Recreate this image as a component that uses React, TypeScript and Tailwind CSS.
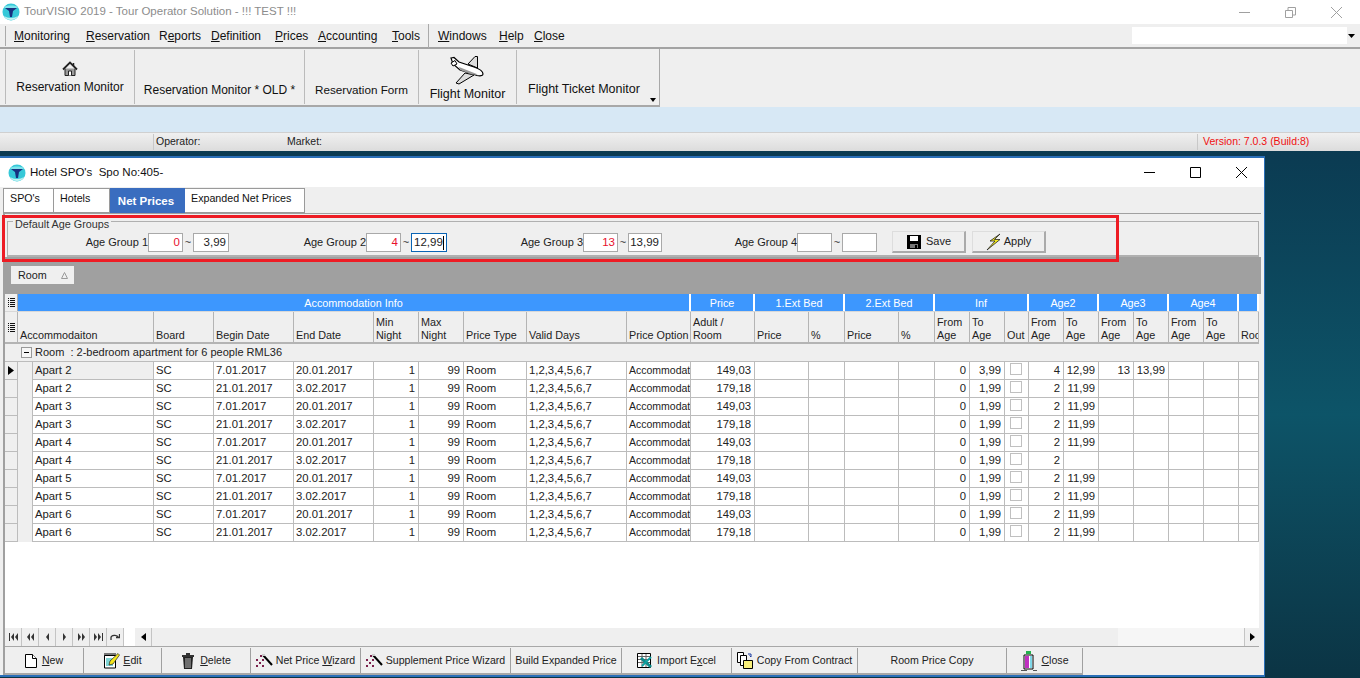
import React from "react";

const COLS =
  "grid grid-cols-[13px_15px_121px_60px_80px_80px_45px_45px_63px_100px_64px_64px_54px_36px_54px_36px_35px_35px_24px_35px_35px_35px_35px_35px_35px_20px]";

type Row = {
  name: string;
  begin: string;
  end: string;
  price: string;
  infTo: string;
  a2From: string;
  a2To?: string;
  a3From?: string;
  a3To?: string;
};

const rows: Row[] = [
  { name: "Apart 2", begin: "7.01.2017", end: "20.01.2017", price: "149,03", infTo: "3,99", a2From: "4", a2To: "12,99", a3From: "13", a3To: "13,99" },
  { name: "Apart 2", begin: "21.01.2017", end: "3.02.2017", price: "179,18", infTo: "1,99", a2From: "2", a2To: "11,99" },
  { name: "Apart 3", begin: "7.01.2017", end: "20.01.2017", price: "149,03", infTo: "1,99", a2From: "2", a2To: "11,99" },
  { name: "Apart 3", begin: "21.01.2017", end: "3.02.2017", price: "179,18", infTo: "1,99", a2From: "2", a2To: "11,99" },
  { name: "Apart 4", begin: "7.01.2017", end: "20.01.2017", price: "149,03", infTo: "1,99", a2From: "2", a2To: "11,99" },
  { name: "Apart 4", begin: "21.01.2017", end: "3.02.2017", price: "179,18", infTo: "1,99", a2From: "2" },
  { name: "Apart 5", begin: "7.01.2017", end: "20.01.2017", price: "149,03", infTo: "1,99", a2From: "2", a2To: "11,99" },
  { name: "Apart 5", begin: "21.01.2017", end: "3.02.2017", price: "179,18", infTo: "1,99", a2From: "2", a2To: "11,99" },
  { name: "Apart 6", begin: "7.01.2017", end: "20.01.2017", price: "149,03", infTo: "1,99", a2From: "2", a2To: "11,99" },
  { name: "Apart 6", begin: "21.01.2017", end: "3.02.2017", price: "179,18", infTo: "1,99", a2From: "2", a2To: "11,99" },
];

const AppLogo = () => (
  <svg width="18" height="18" viewBox="0 0 18 18">
    <circle cx="9" cy="9" r="8.5" fill="#35c8d8" />
    <path d="M2 13c2 3 4 4 7 4s5-1 7-4c-2 1-4 2-7 2s-5-1-7-2z" fill="#bff3f3" />
    <path d="M3 5h12l-4 3-1 6H8L7 8z" fill="#17307f" />
    <path d="M2 4c3-2 11-2 14 0l-1 1H3z" fill="#7fe4ec" />
  </svg>
);

const Home = () => (
  <svg width="16" height="16" viewBox="0 0 16 16" fill="none" stroke="#222">
    <path d="M1 8.500L8 1.500L15 8.500" strokeWidth="1.800" />
    <path d="M3 7.500V14.500H13V7.500" fill="#9a9a9a" />
    <path d="M6.500 14.500V10H9.500V14.500" fill="#fff" />
    <path d="M11.500 2V5" strokeWidth="1.500" />
  </svg>
);

const Plane = () => (
  <svg width="36" height="30" viewBox="0 0 36 30">
    <path d="M18 9L25 1.500L27.500 1.500L27.500 13z" fill="#ddd" stroke="#000" />
    <path d="M15 18L24 20L9 29L6 28z" fill="#ddd" stroke="#000" />
    <path d="M1 3L4 2.500L9 7L24 12C30 14 33 17 33 19C33 21 30 21 27 20.500L10 15L3 9z" fill="#fff" stroke="#000" strokeWidth="1.200" />
    <path d="M9 12L28 19.500L22 19.500L10 15z" fill="#999" />
    <path d="M1 8L5 5.500L7 9L3 11z" fill="#fff" stroke="#000" />
  </svg>
);

const Floppy = () => (
  <svg width="16" height="16" viewBox="0 0 16 16">
    <path d="M1 1H15V15H1z" fill="#000" />
    <path d="M4 2H12V7H4z" fill="#fff" />
    <path d="M4 10H12V14H4z" fill="#777" />
    <path d="M9 11H11V14H9z" fill="#000" />
  </svg>
);

const Bolt = () => (
  <svg width="16" height="18" viewBox="0 0 16 18">
    <path d="M14 1L4 8H9L1 17L14 6.500H8.500z" fill="#f6ec1e" stroke="#222" strokeWidth="0.800" />
  </svg>
);

const NewDoc = () => (
  <svg width="12" height="14" viewBox="0 0 12 14" fill="#fff" stroke="#000">
    <path d="M0.500 0.500H7.500L11.500 4.500V13.500H0.500z" />
    <path d="M7.500 0.500V4.500H11.500" />
  </svg>
);

const EditNote = () => (
  <svg width="17" height="17" viewBox="0 0 17 17">
    <path d="M1.500 3.500H12.500V16H1.500z" fill="#fff" stroke="#000" />
    <path d="M2 1V4M4 1V4M6 1V4M8 1V4M10 1V4M12 1V4" stroke="#000" />
    <path d="M3 7H10M3 9H8M3 11H8M3 13H10" stroke="#0aa" />
    <path d="M7 9L15 1.500L16.500 3L10 12L6 13z" fill="#f4e61c" stroke="#222" strokeWidth="0.700" />
  </svg>
);

const Trash = () => (
  <svg width="14" height="18" viewBox="0 0 14 18">
    <path d="M1 3H13V5H1z" fill="#333" />
    <path d="M5 1H9V3H5z" fill="#333" />
    <path d="M2 5H12L11 17H3z" fill="#222" />
    <path d="M5 6V16M7 6V16M9 6V16" stroke="#bbb" />
  </svg>
);

const Wand = () => (
  <svg width="17" height="16" viewBox="0 0 17 16">
    <path d="M7 2L16 12" stroke="#000" strokeWidth="2" />
    <path d="M6 1H9V3H6z" fill="#ccc" />
    <path d="M4 2h2v2H4zM0 6h2v2H0zM6 6h2v2H6zM3 9h2v2H3zM0 12h2v2H0zM6 12h2v2H6z" fill="#7a1f4a" />
  </svg>
);

const ExcelIcon = () => (
  <svg width="17" height="17" viewBox="0 0 17 17">
    <path d="M0.500 1.500H13.500V15.500H0.500z" fill="#fff" stroke="#000" />
    <path d="M1 4.500H13M1 7.500H13M1 10.500H13M5 2V15M9 2V15" stroke="#666" />
    <path d="M4 6L14 15" stroke="#0d8a8a" strokeWidth="3" />
    <path d="M14 5L5 14" stroke="#11a0a0" strokeWidth="2" />
  </svg>
);

const CopyIcon = () => (
  <svg width="17" height="17" viewBox="0 0 17 17">
    <path d="M0.500 0.500H6.500V10.500H0.500z" fill="#fff" stroke="#000" />
    <path d="M3.500 3.500H9.500V13.500H3.500z" fill="#fff" stroke="#000" />
    <path d="M6.500 8.500H15.500V16.500H6.500z" fill="#f7ee7a" stroke="#000" />
    <path d="M11 2H14V5M14 5L12.500 3.500" stroke="#1a3aa0" fill="none" />
  </svg>
);

const DoorIcon = () => (
  <svg width="18" height="22" viewBox="0 0 18 22">
    <path d="M6 1H11V4H6z" fill="#22b14c" />
    <path d="M4 5H13V19H4z" fill="#fff" stroke="#000" />
    <path d="M5 6H9V18H5z" fill="#c030c0" />
    <path d="M10 6H12V18H10z" fill="#7fd7e8" />
    <path d="M1 20H7V21H1zM13 20H17V21H13z" fill="#555" />
  </svg>
);

const NavIcon = ({ d }: { d: string }) => (
  <svg width="9" height="8" viewBox="0 0 9 8" fill="#333">
    <path d={d} />
  </svg>
);

const navPaths = [
  "M0 0H1V8H0zM5 0V8L2 4zM9 0V8L6 4z",
  "M4 0V8L1 4zM8 0V8L5 4z",
  "M6 0V8L3 4z",
  "M3 0V8L6 4z",
  "M1 0V8L4 4zM5 0V8L8 4z",
  "M0 0V8L3 4zM4 0V8L7 4zM8 0H9V8H8z",
];

const AgeGroup = ({ label, labelW, from, to, toW, focused }: { label: string; labelW: string; from?: string; to?: string; toW: string; focused?: boolean }) => (
  <div className="flex items-center">
    <span className={`${labelW} text-right text-[11px] text-[#222]`}>{label}</span>
    <div className="w-[35px] h-[19px] bg-white border border-[#a9a9a9] text-right pr-[2px] text-[11.500px] leading-[17px] text-[#e8112d]">{from}</div>
    <span className="w-[10px] text-center text-[11px] text-[#333]">~</span>
    <div className={`${toW} h-[19px] bg-white border ${focused ? "border-[#0a64b4] text-left pl-[2px]" : "border-[#a9a9a9] text-right pr-[2px]"} text-[11.500px] leading-[17px] text-[#222]`}>
      {to}
      {focused && <span className="inline-block w-px h-[14px] bg-black align-middle" />}
    </div>
  </div>
);

const MenuItem = ({ w, pre = "", u, post }: { w: string; pre?: string; u: string; post: string }) => (
  <span className={`${w} whitespace-nowrap`}>
    {pre}
    <u>{u}</u>
    {post}
  </span>
);

const ToolButton = ({ w, children }: { w: string; children: React.ReactNode }) => (
  <div className={`${w} h-[25px] border-r border-[#a0a0a0] flex items-center justify-center gap-[3px] text-[10.600px] text-[#222] whitespace-nowrap`}>
    {children}
  </div>
);

const Band = ({ span, children }: { span: string; children?: React.ReactNode }) => (
  <div className={`${span} h-[17px] bg-[#3d97fe] border-r-2 border-white text-white text-center text-[10.800px] leading-[18px] overflow-hidden`}>
    {children}
  </div>
);

const Head = ({ top, bottom }: { top?: string; bottom: string }) => (
  <div className="h-[32px] bg-[#efefef] border-r border-b-2 border-[#b4b4b4] pl-[2px] text-[10.800px] leading-[13px] text-[#222] overflow-hidden whitespace-nowrap flex flex-col justify-end">
    {top && <span>{top}</span>}
    <span>{bottom}</span>
  </div>
);

const Cell = ({ right, children, selected }: { right?: boolean; children?: React.ReactNode; selected?: boolean }) => (
  <div className={`h-[18px] ${selected ? "bg-[#efefef]" : "bg-white"} border-r border-b border-[#bcbcbc] ${right ? "text-right pr-[3px]" : "text-left pl-[2px]"} text-[11.300px] leading-[17px] text-[#222] overflow-hidden whitespace-nowrap`}>
    {children}
  </div>
);

export default function App() {
  return (
    <div className="w-[1360px] h-[678px] overflow-hidden flex flex-col bg-[#0e4a5e] font-['Liberation_Sans',Arial,sans-serif]">
      {/* main window */}
      <div className="h-[24px] bg-white flex items-center pl-[2px] pr-[18px]">
        <AppLogo />
        <span className="ml-[4px] text-[11.500px] text-[#8c8c8c]">TourVISIO 2019 - Tour Operator Solution - !!! TEST !!!</span>
        <div className="ml-auto flex items-center gap-[35px] text-[#a0a0a0]">
          <svg width="11" height="11" viewBox="0 0 11 11" stroke="currentColor"><path d="M0 5.500H11" /></svg>
          <svg width="11" height="11" viewBox="0 0 11 11" fill="none" stroke="currentColor"><path d="M0.500 3.500H7.500V10.500H0.500zM3 3V0.500H10.500V8H8" /></svg>
          <svg width="11" height="11" viewBox="0 0 11 11" stroke="currentColor"><path d="M0 0L11 11M11 0L0 11" /></svg>
        </div>
      </div>

      <div className="h-[25px] bg-[#efefef] border-b-2 border-[#a3a3a3] flex items-center pl-[5px] pr-[4px] text-[12px] text-[#111]">
        <div className="w-[423px] h-[20px] border-l border-[#aaa] flex items-center pl-[8px]">
          <MenuItem w="w-[72px]" u="M" post="onitoring" />
          <MenuItem w="w-[73px]" u="R" post="eservation" />
          <MenuItem w="w-[52px]" pre="R" u="e" post="ports" />
          <MenuItem w="w-[64px]" u="D" post="efinition" />
          <MenuItem w="w-[43px]" u="P" post="rices" />
          <MenuItem w="w-[74px]" u="A" post="ccounting" />
          <MenuItem w="w-[28px]" u="T" post="ools" />
        </div>
        <div className="h-[24px] border-l border-[#aaa] pl-[9px] flex items-center">
          <MenuItem w="w-[61px]" u="W" post="indows" />
          <MenuItem w="w-[35px]" u="H" post="elp" />
          <MenuItem w="w-[30px]" u="C" post="lose" />
        </div>
        <div className="ml-auto w-[224px] h-[17px] bg-white flex items-center justify-end">
          <span className="w-[9px] h-full bg-[#efefef] flex items-center justify-center">
            <svg width="7" height="4" viewBox="0 0 7 4"><path d="M0 0H7L3.500 4z" fill="#000" /></svg>
          </span>
        </div>
      </div>

      <div className="h-[58px] bg-[#efefef]">
        <div className="w-[660px] h-[58px] border-r border-b-2 border-[#a8a8a8] flex pl-[5px] text-[12px] text-[#111]">
          <div className="w-[130px] border-l border-r border-[#bbb] flex flex-col items-center justify-start pt-[11px] gap-[1px] my-[1px]">
            <Home />
            <span>Reservation Monitor</span>
          </div>
          <div className="w-[170px] border-r border-[#bbb] flex items-end justify-center pb-[5px] my-[1px]">Reservation Monitor * OLD *</div>
          <div className="w-[114px] border-r border-[#bbb] flex items-end justify-center pb-[5px] my-[1px] text-[11.700px]">Reservation Form</div>
          <div className="w-[98px] border-r border-[#bbb] flex flex-col items-center justify-end my-[1px] text-[12.500px]">
            <Plane />
            <span>Flight Monitor</span>
          </div>
          <div className="relative flex-1 flex items-end pl-[11px] pb-[5px] my-[1px] text-[12.500px]">
            Flight Ticket Monitor
            <svg className="absolute right-[3px] bottom-[2px]" width="6" height="4" viewBox="0 0 6 4"><path d="M0 0H6L3 4z" fill="#000" /></svg>
          </div>
        </div>
      </div>

      <div className="h-[25px] bg-[#d7e8f5]" />

      <div className="h-[19px] bg-gradient-to-b from-[#f0f0f0] to-[#dcdcdc] border-t border-[#d0d0d0] flex items-center text-[10.500px] text-[#222]">
        <div className="w-[153px]" />
        <div className="w-[134px] border-l border-[#c8c8c8] pl-[2px]">Operator:</div>
        <div>Market:</div>
        <div className="ml-auto w-[163px] border-l border-[#c8c8c8] pl-[5px] text-[#f01010]">Version: 7.0.3 (Build:8)</div>
      </div>

      {/* desktop */}
      <div className="flex-1 pt-[5px] bg-gradient-to-b from-[#0b3b52] via-[#0d5468] to-[#0b3444] min-h-0">
        {/* child window */}
        <div className="relative w-[1265px] h-[521px] flex flex-col bg-[#efefef] border-t-2 border-r border-b-2 border-[#2a6fb8]">
          <div className="h-[29px] shrink-0 bg-white flex items-center pl-[8px] pr-[17px]">
            <AppLogo />
            <span className="ml-[4px] text-[11.500px] text-[#111] whitespace-pre">Hotel SPO's  Spo No:405-</span>
            <div className="ml-auto flex items-center gap-[35px] text-black">
              <svg width="11" height="11" viewBox="0 0 11 11" stroke="currentColor"><path d="M0 5.500H11" /></svg>
              <svg width="11" height="11" viewBox="0 0 11 11" fill="none" stroke="currentColor"><path d="M0.500 0.500H10.500V10.500H0.500z" /></svg>
              <svg width="11" height="11" viewBox="0 0 11 11" stroke="currentColor"><path d="M0 0L11 11M11 0L0 11" /></svg>
            </div>
          </div>

          <div className="h-[26px] shrink-0 flex pl-[3px] pt-[1px] text-[10.700px] text-[#111]">
            <div className="w-[51px] bg-white border border-[#9a9a9a] pl-[6px] leading-[19px]">SPO's</div>
            <div className="w-[56px] bg-white border-y border-r border-[#9a9a9a] pl-[6px] leading-[19px]">Hotels</div>
            <div className="w-[75px] bg-[#3a6dbf] text-white font-bold text-center text-[11.500px] leading-[26px] pr-[3px]">Net Prices</div>
            <div className="w-[120px] bg-white border-y border-r border-[#9a9a9a] pl-[6px] leading-[19px]">Expanded Net Prices</div>
          </div>

          <div className="flex-1 min-h-0 ml-[3px] mr-[3px] border-l-2 border-t border-[#a0a0a0] flex flex-col">
            <fieldset className="h-[42px] shrink-0 mt-[1px] mx-[2px] border border-[#b0b0b0] border-b-2 pl-[5px]">
              <legend className="px-[2px] text-[10.800px] leading-[13px] text-[#333] translate-y-[3px]">Default Age Groups</legend>
              <div className="flex items-center -ml-[8px] mt-[4px]">
                <AgeGroup label="Age Group 1" labelW="w-[143px]" from="0" to="3,99" toW="w-[36px]" />
                <AgeGroup label="Age Group 2" labelW="w-[137px]" from="4" to="12,99" toW="w-[36px]" focused />
                <AgeGroup label="Age Group 3" labelW="w-[136px]" from="13" to="13,99" toW="w-[34px]" />
                <AgeGroup label="Age Group 4" labelW="w-[135px]" toW="w-[35px]" />
                <div className="ml-[15px] w-[74px] h-[22px] -mt-[1px] border-r-2 border-b-2 border-[#aaa] border-t border-l border-t-[#ddd] border-l-[#ddd] flex items-center justify-center gap-[4px] text-[11px] text-[#222]">
                  <Floppy /> Save
                </div>
                <div className="ml-[6px] w-[74px] h-[22px] -mt-[1px] border-r-2 border-b-2 border-[#aaa] border-t border-l border-t-[#ddd] border-l-[#ddd] flex items-center justify-center gap-[2px] text-[11px] text-[#222]">
                  <Bolt /> Apply
                </div>
              </div>
            </fieldset>

            <div className="h-[37px] shrink-0 bg-[#a0a0a0] pl-[6px] pt-[9px]">
              <div className="w-[63px] h-[18px] bg-[#efefef] flex items-center pl-[7px] gap-[14px] text-[10.800px] text-[#222]">
                Room
                <svg width="7" height="7" viewBox="0 0 7 7" fill="none" stroke="#999"><path d="M3.500 0.500L6.500 6.500H0.500z" /></svg>
              </div>
            </div>

            {/* grid */}
            <div className="w-[1254px] bg-white overflow-hidden flex-1 min-h-0">
              <div className={COLS}>
                <div className="h-[17px] bg-[#efefef] border-r border-[#aaa] flex items-center justify-center"><ListIcon /></div>
                <Band span="col-span-10">Accommodation Info</Band>
                <Band span="col-span-1">Price</Band>
                <Band span="col-span-2">1.Ext Bed</Band>
                <Band span="col-span-2">2.Ext Bed</Band>
                <Band span="col-span-3">Inf</Band>
                <Band span="col-span-2">Age2</Band>
                <Band span="col-span-2">Age3</Band>
                <Band span="col-span-2">Age4</Band>
                <Band span="col-span-1" />
              </div>
              <div className={`${COLS} border-t border-[#d8d8d8]`}>
                <div className="h-[32px] bg-[#efefef] border-r border-b-2 border-[#b4b4b4] flex items-center justify-center"><ListIcon /></div>
                <div className="col-span-2"><Head bottom="Accommodaiton" /></div>
                <Head bottom="Board" />
                <Head bottom="Begin Date" />
                <Head bottom="End Date" />
                <Head top="Min" bottom="Night" />
                <Head top="Max" bottom="Night" />
                <Head bottom="Price Type" />
                <Head bottom="Valid Days" />
                <Head bottom="Price Option" />
                <Head top="Adult /" bottom="Room" />
                <Head bottom="Price" />
                <Head bottom="%" />
                <Head bottom="Price" />
                <Head bottom="%" />
                <Head top="From" bottom="Age" />
                <Head top="To" bottom="Age" />
                <Head bottom="Out" />
                <Head top="From" bottom="Age" />
                <Head top="To" bottom="Age" />
                <Head top="From" bottom="Age" />
                <Head top="To" bottom="Age" />
                <Head top="From" bottom="Age" />
                <Head top="To" bottom="Age" />
                <Head bottom="Roo" />
              </div>
              <div className="h-[18px] bg-[#efefef] border-b border-[#bcbcbc] flex items-center pl-[16px] text-[11px] text-[#222]">
                <span className="w-[11px] h-[11px] border border-[#999] bg-[#f6f6f6] flex items-center justify-center mr-[3px]">
                  <span className="w-[5px] h-px bg-black" />
                </span>
                <span className="whitespace-pre">Room  : 2-bedroom apartment for 6 people RML36</span>
              </div>
              {rows.map((r, i) => (
                <div key={i} className={COLS}>
                  <div className="h-[18px] bg-[#efefef] border-r border-b border-[#bcbcbc] flex items-center justify-center">
                    {i === 0 && <svg width="6" height="9" viewBox="0 0 6 9"><path d="M0 0L6 4.500L0 9z" fill="#000" /></svg>}
                  </div>
                  <div className="h-[18px] bg-[#efefef] border-r border-[#bcbcbc]" />
                  <Cell selected={i === 0}>{r.name}</Cell>
                  <Cell>SC</Cell>
                  <Cell>{r.begin}</Cell>
                  <Cell>{r.end}</Cell>
                  <Cell right>1</Cell>
                  <Cell right>99</Cell>
                  <Cell>Room</Cell>
                  <Cell>1,2,3,4,5,6,7</Cell>
                  <Cell><span className="text-[10.500px]">Accommodat</span></Cell>
                  <Cell right>{r.price}</Cell>
                  <Cell />
                  <Cell />
                  <Cell />
                  <Cell />
                  <Cell right>0</Cell>
                  <Cell right>{r.infTo}</Cell>
                  <Cell>
                    <span className="block w-[12px] h-[12px] mt-[1px] ml-[3px] bg-white border border-[#c0c0c0]" />
                  </Cell>
                  <Cell right>{r.a2From}</Cell>
                  <Cell right>{r.a2To}</Cell>
                  <Cell right>{r.a3From}</Cell>
                  <Cell right>{r.a3To}</Cell>
                  <Cell />
                  <Cell />
                  <Cell />
                </div>
              ))}
            </div>

            {/* navigator and scrollbar */}
            <div className="h-[19px] shrink-0 w-[1254px] flex bg-[#efefef] border-b border-[#a8a8a8]">
              {navPaths.map((d, i) => (
                <div key={i} className="w-[17px] border-r border-[#c4c4c4] flex items-center justify-center"><NavIcon d={d} /></div>
              ))}
              <div className="w-[17px] border-r border-[#c4c4c4] flex items-center justify-center">
                <svg width="10" height="8" viewBox="0 0 10 8" fill="none" stroke="#333" strokeWidth="1.300"><path d="M1 7V4.500C1 2.500 7 1 8.500 4.500M6 4.500H9.500V1" /></svg>
              </div>
              <div className="w-[11px] bg-white" />
              <div className="w-[17px] border-r border-[#c4c4c4] flex items-center justify-center">
                <svg width="5" height="8" viewBox="0 0 5 8"><path d="M5 0V8L0 4z" fill="#000" /></svg>
              </div>
              <div className="w-[966px]" />
              <div className="w-[126px] bg-[#f6f6f6]" />
              <div className="flex-1 border-l border-[#c4c4c4] flex items-center justify-center">
                <svg width="5" height="8" viewBox="0 0 5 8"><path d="M0 0V8L5 4z" fill="#000" /></svg>
              </div>
            </div>

            {/* bottom toolbar */}
            <div className="h-[28px] shrink-0 pt-[1px]">
              <div className="w-fit flex border-b-2 border-[#a8a8a8]">
                <ToolButton w="w-[79px]"><NewDoc /> <span className="ml-[2px]"><u>N</u>ew</span></ToolButton>
                <ToolButton w="w-[78px]"><EditNote /> <span><u>E</u>dit</span></ToolButton>
                <ToolButton w="w-[89px]"><Trash /> <span className="ml-[2px]"><u>D</u>elete</span></ToolButton>
                <ToolButton w="w-[110px]"><Wand /> <span>Net Price <u>W</u>izard</span></ToolButton>
                <ToolButton w="w-[150px]"><Wand /> <span>Supplement Price Wizard</span></ToolButton>
                <ToolButton w="w-[111px]">Build Expanded Price</ToolButton>
                <ToolButton w="w-[110px]"><ExcelIcon /> <span>Import E<u>x</u>cel</span></ToolButton>
                <ToolButton w="w-[126px]"><CopyIcon /> <span>Copy From Contract</span></ToolButton>
                <ToolButton w="w-[149px]">Room Price Copy</ToolButton>
                <ToolButton w="w-[76px]"><DoorIcon /> <span><u>C</u>lose</span></ToolButton>
              </div>
            </div>
          </div>

          {/* red annotation around the age groups */}
          <div className="absolute left-[2px] top-[57px] w-[1117px] h-[47px] border-[3px] border-[#ed1c24] pointer-events-none" />
        </div>
      </div>
    </div>
  );
}

function ListIcon() {
  return (
    <svg width="7" height="11" viewBox="0 0 7 11" stroke="#111">
      <path d="M0 1.500H1M2 1.500H7M0 3.500H1M2 3.500H7M0 5.500H1M2 5.500H7M0 7.500H1M2 7.500H7M0 9.500H1M2 9.500H7" />
    </svg>
  );
}
